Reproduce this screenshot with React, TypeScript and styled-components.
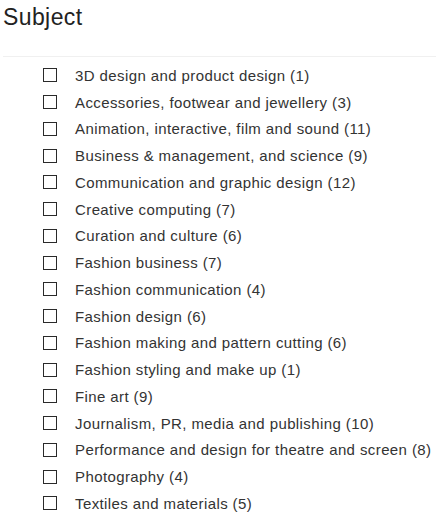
import React from "react";
import styled, { createGlobalStyle } from "styled-components";

const Global = createGlobalStyle`
  html, body { margin: 0; padding: 0; background: #fff; }
  body { font-family: "Liberation Sans", Arial, Helvetica, sans-serif; color: #333; }
`;

const Panel = styled.section`
  width: 436px;
  display: flex;
  flex-direction: column;
`;

const Title = styled.h2`
  margin: 3px 0 0 3px;
  font-size: 23px;
  line-height: 28px;
  font-weight: 400;
  color: #222;
  letter-spacing: 0.4px;
`;

const Divider = styled.hr`
  margin: 25px 0 0 3px;
  border: 0;
  border-top: 1px solid #f0f0f0;
  height: 0;
`;

const List = styled.ul`
  list-style: none;
  margin: 0;
  padding: 5px 0 0 43px;
  display: flex;
  flex-direction: column;
`;

const Row = styled.li`
  height: 26.75px;
  display: flex;
  align-items: center;
  gap: 18px;
`;

const Box = styled.span`
  width: 14px;
  height: 14px;
  box-sizing: border-box;
  border: 1.4px solid #2a2a2a;
  flex: none;
`;

const Label = styled.span`
  font-size: 15px;
  line-height: 17px;
  color: #333;
  letter-spacing: 0.4px;
  white-space: nowrap;
`;

const items = [
  "3D design and product design (1)",
  "Accessories, footwear and jewellery (3)",
  "Animation, interactive, film and sound (11)",
  "Business & management, and science (9)",
  "Communication and graphic design (12)",
  "Creative computing (7)",
  "Curation and culture (6)",
  "Fashion business (7)",
  "Fashion communication (4)",
  "Fashion design (6)",
  "Fashion making and pattern cutting (6)",
  "Fashion styling and make up (1)",
  "Fine art (9)",
  "Journalism, PR, media and publishing (10)",
  "Performance and design for theatre and screen (8)",
  "Photography (4)",
  "Textiles and materials (5)",
];

export default function App() {
  return (
    <>
      <Global />
      <Panel>
        <Title>Subject</Title>
        <Divider />
        <List>
          {items.map((t) => (
            <Row key={t}>
              <Box />
              <Label>{t}</Label>
            </Row>
          ))}
        </List>
      </Panel>
    </>
  );
}
